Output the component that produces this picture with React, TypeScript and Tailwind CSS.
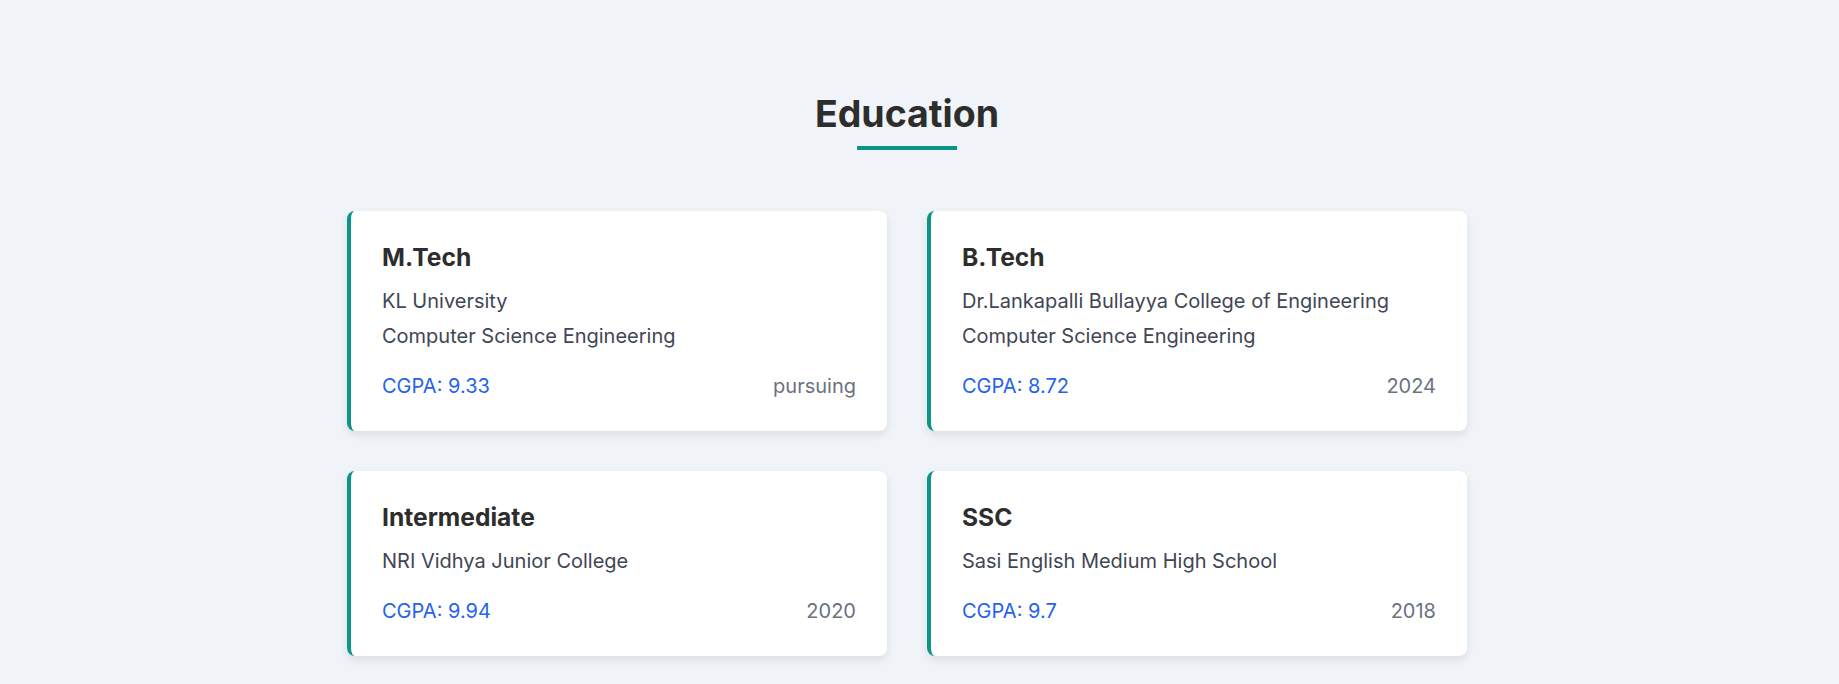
const education = [
  {
    degree: 'M.Tech',
    lines: ['KL University', 'Computer Science Engineering'],
    cgpa: '9.33',
    year: 'pursuing',
  },
  {
    degree: 'B.Tech',
    lines: ['Dr.Lankapalli Bullayya College of Engineering', 'Computer Science Engineering'],
    cgpa: '8.72',
    year: '2024',
  },
  {
    degree: 'Intermediate',
    lines: ['NRI Vidhya Junior College'],
    cgpa: '9.94',
    year: '2020',
  },
  {
    degree: 'SSC',
    lines: ['Sasi English Medium High School'],
    cgpa: '9.7',
    year: '2018',
  },
];

const EducationCard = ({ item }: { item: (typeof education)[number] }) => {
  return (
    <div className="bg-white rounded-lg border-l-4 border-[#0d9488] shadow-[0_4px_8px_rgba(0,0,0,0.09)] px-[31px] pt-8 pb-[31px]">
      <h3 className="text-[24.6px] leading-[29px] font-bold text-[#2d2d2d]">{item.degree}</h3>
      <div className="mt-[15px] flex flex-col gap-[7px]">
        {item.lines.map((line) => (
          <p key={line} className="text-[20px] leading-[28px] text-[#3f4654]">
            {line}
          </p>
        ))}
      </div>
      <div className="mt-[22px] flex justify-between items-center text-[20px] leading-[28px]">
        <span className="text-[#2563eb]">CGPA: {item.cgpa}</span>
        <span className="text-[#6b7280]">{item.year}</span>
      </div>
    </div>
  );
};

const App = () => {
  return (
    <div className="min-h-screen bg-[#f0f4f8] pr-[25px] font-['Inter','Liberation_Sans',sans-serif]">
      <section className="pt-[91px] pb-10">
        <div className="flex flex-col items-center">
          <h2 className="text-[37.5px] leading-[46px] font-bold text-[#2d2d2d]">Education</h2>
          <div className="mt-[9px] w-[100px] h-1 bg-[#0d9488]" />
        </div>

        <div className="max-w-[1120px] mx-auto mt-[61px] grid grid-cols-2 gap-10">
          {education.map((item) => (
            <EducationCard key={item.degree} item={item} />
          ))}
        </div>
      </section>
    </div>
  );
};

export default App;
